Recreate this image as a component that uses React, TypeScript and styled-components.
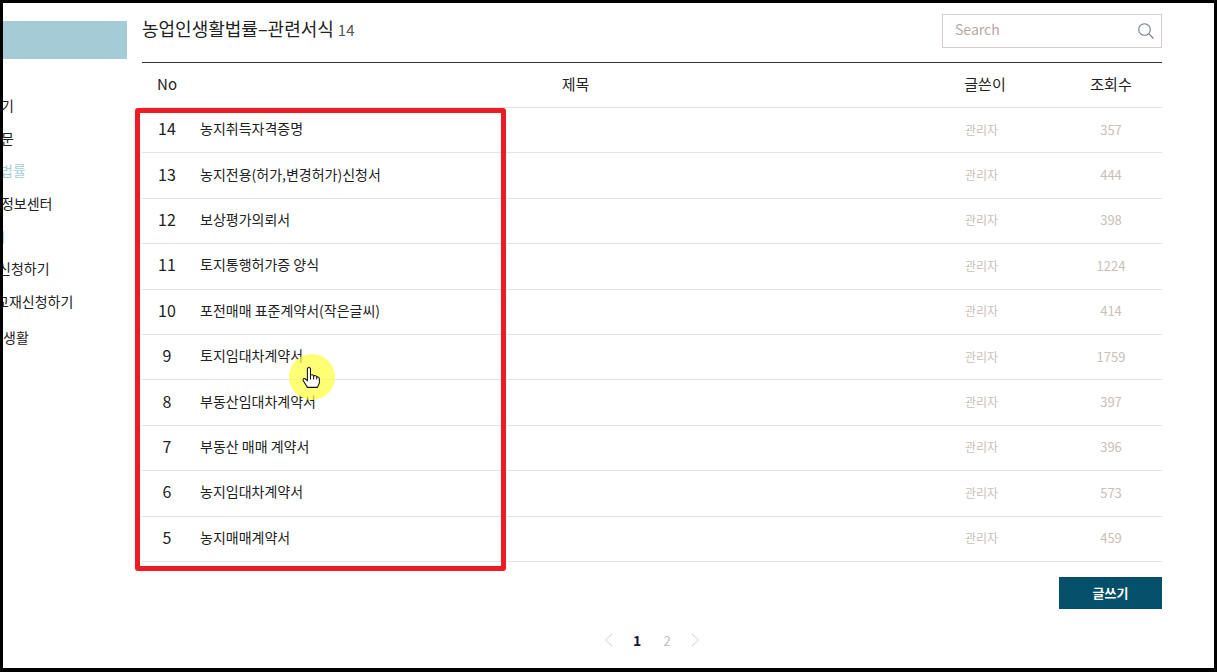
import React from "react";
import styled, { createGlobalStyle } from "styled-components";

const rows = [
  { no: 14, title: "농지취득자격증명", views: 357 },
  { no: 13, title: "농지전용(허가,변경허가)신청서", views: 444 },
  { no: 12, title: "보상평가의뢰서", views: 398 },
  { no: 11, title: "토지통행허가증 양식", views: 1224 },
  { no: 10, title: "포전매매 표준계약서(작은글씨)", views: 414 },
  { no: 9, title: "토지임대차계약서", views: 1759 },
  { no: 8, title: "부동산임대차계약서", views: 397 },
  { no: 7, title: "부동산 매매 계약서", views: 396 },
  { no: 6, title: "농지임대차계약서", views: 573 },
  { no: 5, title: "농지매매계약서", views: 459 },
];

// the menu is scrolled off the left edge in the picture, so some labels are cut
const menu = [
  { label: "기", shift: -2 },
  { label: "문", shift: -2 },
  { label: "법률", shift: -3, active: true },
  { label: "인정보센터", shift: -15 },
  { label: "기", shift: -10.5, active: true },
  { label: "신청하기", shift: -5 },
  { label: "교재신청하기", shift: -7 },
  { label: "생활", shift: 0, gap: 3 },
];

const GlobalStyle = createGlobalStyle`
  html, body {
    margin: 0;
    padding: 0;
    background: #fff;
  }
  body {
    font-family: "Noto Sans CJK KR", "Noto Sans", sans-serif;
  }
`;

const App = () => (
  <>
    <GlobalStyle />
    <Frame>
      <Sidebar>
        <SideBanner />
        <MenuList>
          {menu.map((item, i) => (
            <MenuItem key={i} $shift={item.shift} $active={item.active} $gap={item.gap}>
              {item.label}
            </MenuItem>
          ))}
        </MenuList>
      </Sidebar>
      <Main>
        <TopBar>
          <Title>
            농업인생활법률–관련서식 <Count>14</Count>
          </Title>
          <SearchBox>
            <SearchText>Search</SearchText>
            <svg width="18" height="18" viewBox="0 0 18 18" fill="none" stroke="#6f7f86" strokeWidth="1.1">
              <circle cx="7.5" cy="7.5" r="5.8" />
              <path d="M11.7 11.7 L16.5 16.5" />
            </svg>
          </SearchBox>
        </TopBar>
        <HeadRow>
          <span>No</span>
          <HeadTitle>제목</HeadTitle>
          <span>글쓴이</span>
          <span>조회수</span>
        </HeadRow>
        {rows.map((row) => (
          <Row key={row.no}>
            <RowNo>{row.no}</RowNo>
            <RowTitle>{row.title}</RowTitle>
            <RowWriter>관리자</RowWriter>
            <RowViews>{row.views}</RowViews>
          </Row>
        ))}
        <ButtonBar>
          <WriteButton>글쓰기</WriteButton>
        </ButtonBar>
        <Pager>
          <svg width="10" height="14" viewBox="0 0 10 14" fill="none" stroke="#d6ccc6" strokeWidth="1">
            <path d="M8.5 0.5 L1.5 7 L8.5 13.5" />
          </svg>
          <PageNums>
            <PageNum $current>1</PageNum>
            <PageNum>2</PageNum>
          </PageNums>
          <svg width="10" height="14" viewBox="0 0 10 14" fill="none" stroke="#d6ccc6" strokeWidth="1">
            <path d="M1.5 0.5 L8.5 7 L1.5 13.5" />
          </svg>
        </Pager>
      </Main>
      <RedBox />
      <Highlight>
        <svg width="19" height="24" viewBox="0 0 18 23">
          <path
            d="M6 20.5 L15.5 20.5 L17.5 16.5 L17.5 12 Q17 10 15 10.5 Q14 8.5 12 9.5 Q11 7.5 9 8.8 L9 2.5 Q7.5 0 6 2.5 L6 14 L3.5 12 Q1.5 11.5 2 14 Z"
            fill="#fff"
            stroke="#111"
            strokeWidth="1"
          />
          <path d="M9 8.8 L9 13 M12 9.5 L12 13 M15 10.5 L15 13" stroke="#111" strokeWidth="1" fill="none" />
        </svg>
      </Highlight>
    </Frame>
  </>
);

export default App;

const Frame = styled.div`
  position: relative;
  box-sizing: border-box;
  width: 1217px;
  height: 672px;
  display: flex;
  overflow: hidden;
  background: #fff;
  border-style: solid;
  border-color: #000;
  border-width: 3px 3px 4px 3px;
`;

const Sidebar = styled.aside`
  flex: 0 0 124px;
  overflow: hidden;
  padding-top: 18px;
`;

const SideBanner = styled.div`
  height: 38px;
  background: #a5cbd6;
`;

const MenuList = styled.ul`
  list-style: none;
  margin: 30px 0 0;
  padding: 0;
`;

const MenuItem = styled.li<{ $shift: number; $active?: boolean; $gap?: number }>`
  height: 32.7px;
  line-height: 32.7px;
  font-size: 14px;
  white-space: nowrap;
  color: ${(p) => (p.$active ? "#a5cbd6" : "#222")};
  margin-left: ${(p) => p.$shift}px;
  margin-top: ${(p) => p.$gap || 0}px;
`;

const Main = styled.main`
  flex: 1;
  min-width: 0;
  padding: 0 52px 0 15px;
`;

const TopBar = styled.div`
  display: flex;
  align-items: center;
  justify-content: space-between;
  padding: 11px 0 14px;
  border-bottom: 1px solid #333;
`;

const Title = styled.h2`
  margin: 0 0 6px;
  font-size: 18px;
  font-weight: 400;
  color: #222;
`;

const Count = styled.span`
  font-size: 15px;
  color: #555;
`;

const SearchBox = styled.div`
  box-sizing: border-box;
  width: 220px;
  height: 34px;
  display: flex;
  align-items: center;
  justify-content: space-between;
  padding: 0 6px 0 12px;
  border: 1px solid #d8ccc8;
`;

const SearchText = styled.span`
  margin-bottom: 4px;
  font-size: 14px;
  color: #b5aaa5;
`;

const columns = `
  display: grid;
  grid-template-columns: 50px 1fr 100px 102px;
  column-gap: 25px;
  align-items: center;
  text-align: center;
  box-sizing: border-box;
  padding-bottom: 4px;
  border-bottom: 1px solid #e8e4e1;
`;

const HeadRow = styled.div`
  ${columns}
  height: 45px;
  font-size: 15px;
  color: #222;
`;

const HeadTitle = styled.span`
  padding-left: 24px;
`;

const Row = styled.div`
  ${columns}
  height: 45.4px;
`;

const RowNo = styled.span`
  font-size: 16px;
  color: #222;
`;

const RowTitle = styled.span`
  margin-left: -17px;
  font-size: 14px;
  text-align: left;
  color: #222;
`;

const RowWriter = styled.span`
  padding: 2px 7px 0 0;
  font-size: 12px;
  color: #c9bfb8;
`;

const RowViews = styled.span`
  padding-top: 2px;
  font-size: 13px;
  color: #c9bfb8;
`;

const ButtonBar = styled.div`
  display: flex;
  justify-content: flex-end;
  margin-top: 15px;
`;

const WriteButton = styled.button`
  width: 103px;
  height: 32px;
  padding: 0;
  border: 0;
  background: #044f69;
  color: #fff;
  font-family: inherit;
  font-size: 13px;
  font-weight: 700;
`;

const Pager = styled.div`
  display: flex;
  align-items: center;
  justify-content: center;
  gap: 19px;
  height: 18px;
  margin-top: 22px;
`;

const PageNums = styled.div`
  display: flex;
  gap: 22px;
`;

const PageNum = styled.span<{ $current?: boolean }>`
  font-size: 14px;
  font-weight: ${(p) => (p.$current ? 700 : 400)};
  color: ${(p) => (p.$current ? "#1a1a2a" : "#c9bfb8")};
`;

const RedBox = styled.div`
  position: absolute;
  left: 132px;
  top: 105px;
  width: 361px;
  height: 453px;
  border: 5px solid #ed1c24;
  border-radius: 3px;
`;

const Highlight = styled.div`
  position: absolute;
  left: 286px;
  top: 351px;
  width: 46px;
  height: 46px;
  display: flex;
  align-items: center;
  justify-content: center;
  padding: 1px 3px 0 0;
  box-sizing: border-box;
  border-radius: 50%;
  background: rgba(255, 255, 60, 0.7);
`;
